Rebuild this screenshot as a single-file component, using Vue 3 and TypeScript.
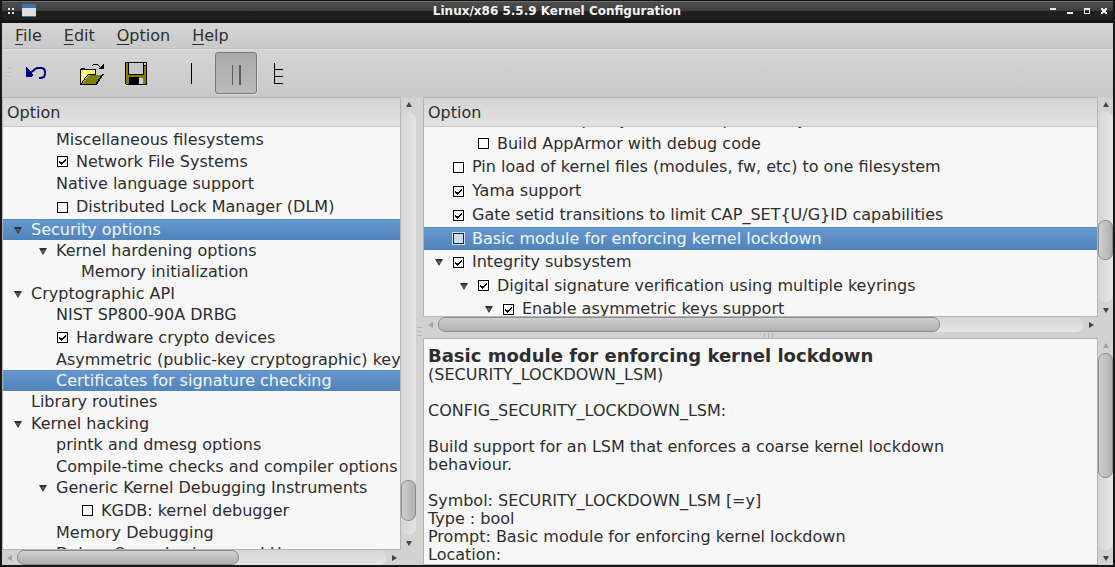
<script setup lang="ts">
import { h, ref } from 'vue'
import type { FunctionalComponent } from 'vue'

interface Row {
  label: string
  depth: number
  size: 'short' | 'mid' | 'check' | 'tall'
  open?: boolean
  box?: boolean
  on?: boolean
  selected?: boolean
}

interface BarProps {
  axis: 'vertical' | 'horizontal'
  before: number
  thumb: number
  after: number
  atStart?: boolean
}

const ScrollBar: FunctionalComponent<BarProps> = (p) => {
  const vertical = p.axis === 'vertical'
  const arrow = (points: string) =>
    h('svg', { width: 8, height: 8, viewBox: '0 0 8 8' }, [h('polygon', { points })])
  return h('div', { class: ['bar', p.axis] }, [
    h(
      'button',
      { class: ['bar-arrow', { off: p.atStart }], type: 'button', 'aria-label': vertical ? 'Scroll up' : 'Scroll left' },
      [arrow(vertical ? '1,6 7,6 4,1' : '6,1 6,7 1,4')],
    ),
    h('div', { class: 'bar-track' }, [
      h('span', { style: { flexGrow: p.before } }),
      h('span', { class: 'bar-thumb', style: { flexGrow: p.thumb } }),
      h('span', { style: { flexGrow: p.after } }),
    ]),
    h(
      'button',
      { class: 'bar-arrow', type: 'button', 'aria-label': vertical ? 'Scroll down' : 'Scroll right' },
      [arrow(vertical ? '1,2 7,2 4,7' : '2,1 2,7 7,4')],
    ),
  ])
}
ScrollBar.props = {
  axis: { type: String, required: true },
  before: { type: Number, required: true },
  thumb: { type: Number, required: true },
  after: { type: Number, required: true },
  atStart: Boolean,
} as any

const menus = [
  ['F', 'ile'],
  ['E', 'dit'],
  ['O', 'ption'],
  ['H', 'elp'],
]

const menuRows = ref<Row[]>([
  { label: 'Miscellaneous filesystems', depth: 2, size: 'short' },
  { label: 'Network File Systems', depth: 2, size: 'check', box: true, on: true },
  { label: 'Native language support', depth: 2, size: 'mid' },
  { label: 'Distributed Lock Manager (DLM)', depth: 2, size: 'tall', box: true },
  { label: 'Security options', depth: 1, size: 'short', open: true, selected: true },
  { label: 'Kernel hardening options', depth: 2, size: 'short', open: true },
  { label: 'Memory initialization', depth: 3, size: 'mid' },
  { label: 'Cryptographic API', depth: 1, size: 'short', open: true },
  { label: 'NIST SP800-90A DRBG', depth: 2, size: 'mid' },
  { label: 'Hardware crypto devices', depth: 2, size: 'check', box: true, on: true },
  { label: 'Asymmetric (public-key cryptographic) key type', depth: 2, size: 'short' },
  { label: 'Certificates for signature checking', depth: 2, size: 'short', selected: true },
  { label: 'Library routines', depth: 1, size: 'mid' },
  { label: 'Kernel hacking', depth: 1, size: 'short', open: true },
  { label: 'printk and dmesg options', depth: 2, size: 'mid' },
  { label: 'Compile-time checks and compiler options', depth: 2, size: 'short' },
  { label: 'Generic Kernel Debugging Instruments', depth: 2, size: 'mid', open: true },
  { label: 'KGDB: kernel debugger', depth: 3, size: 'check', box: true },
  { label: 'Memory Debugging', depth: 2, size: 'short' },
  { label: 'Debug Oops, Lockups and Hangs', depth: 2, size: 'mid' },
])

const optionRows = ref<Row[]>([
  { label: 'Enable policy hash introspection by default', depth: 3, size: 'tall', box: true, on: true },
  { label: 'Build AppArmor with debug code', depth: 2, size: 'check', box: true },
  { label: 'Pin load of kernel files (modules, fw, etc) to one filesystem', depth: 1, size: 'tall', box: true },
  { label: 'Yama support', depth: 1, size: 'tall', box: true, on: true },
  { label: 'Gate setid transitions to limit CAP_SET{U/G}ID capabilities', depth: 1, size: 'tall', box: true, on: true },
  { label: 'Basic module for enforcing kernel lockdown', depth: 1, size: 'check', box: true, selected: true },
  { label: 'Integrity subsystem', depth: 1, size: 'tall', box: true, on: true, open: true },
  { label: 'Digital signature verification using multiple keyrings', depth: 2, size: 'check', box: true, on: true, open: true },
  { label: 'Enable asymmetric keys support', depth: 3, size: 'tall', box: true, on: true, open: true },
])

const panes = [
  { id: 'menu', rows: menuRows },
  { id: 'option', rows: optionRows },
]
</script>

<template>
  <div class="window">
    <header class="titlebar">
      <svg width="8" height="8" viewBox="0 0 8 8" fill="#e6e6e6">
        <path d="M1 1h2v2H1zM5 1h2v2H5zM1 5h2v2H1zM5 5h2v2H5z" />
      </svg>
      <svg width="14" height="14" viewBox="0 0 14 14">
        <rect width="14" height="13" fill="#3f6fae" />
        <rect y="4" width="14" height="8" fill="#dedede" />
      </svg>
      <h1>Linux/x86 5.5.9 Kernel Configuration</h1>
      <div class="controls">
        <button type="button" aria-label="Shade"><svg width="6" height="6"><path d="M0 0h6v2H0z" /></svg></button>
        <button type="button" aria-label="Minimize"><svg width="6" height="6"><path d="M0 4h6v2H0z" /></svg></button>
        <button type="button" aria-label="Maximize">
          <svg width="6" height="6"><path fill-rule="evenodd" d="M0 0h6v6H0zM1 2v3h4V2z" /></svg>
        </button>
        <button type="button" aria-label="Close">
          <svg width="6" height="6"><path d="M0 0h2v1h2V0h2v2H5v2h1v2H4V5H2v1H0V4h1V2H0z" /></svg>
        </button>
      </div>
    </header>

    <nav class="menubar">
      <button v-for="m in menus" :key="m[0]" type="button"><u>{{ m[0] }}</u>{{ m[1] }}</button>
    </nav>

    <div class="toolbar">
      <span class="handle"></span>
      <button type="button" aria-label="Back">
        <svg width="24" height="24" viewBox="0 0 24 24">
          <path d="M2 6h1v1h1v1h1v1h1v1h2v1h-1v1h1v1h1v2h-1v1H2z" fill="#000080" />
          <path d="M6 12l3-2 2-2 2-1h5l2 1 1 2v3l-1 3-3 1h-2" fill="none" stroke="#000080" stroke-width="2" />
        </svg>
      </button>
      <span class="gap"></span>
      <button type="button" aria-label="Load">
        <svg width="24" height="24" viewBox="0 0 24 24" shape-rendering="crispEdges">
          <path d="M0 8h1V7h4v1h11v6h-1V9H1v14H0z" fill="#000" />
          <path d="M1 9h14v4H7v1H6v1H5v1H4v2H3v1H2v2H1z" fill="#ffff70" />
          <path d="M2 23L9 14h14l-6 9z" fill="#808000" />
          <path d="M8 13h16v1h-1v1h-1v2h-1v1h-1v2h-1v1h-1v2h-1v1H0v-1h1v-1h1v-2h1v-1h1v-2h1v-1h1v-1h1v-1h1zM8 14v1H7v1H6v1H5v2H4v1H3v2H2v1h14v-2h1v-1h1v-2h1v-1h1v-2h1v-1h1v-1z" fill="#000" fill-rule="evenodd" />
          <path d="M12 4h1V3h5v1h1v1h1v1h1V5h1V4h1V3h1v5h-5V7h1V6h-1V5h-1V4h-5v1h-1z" fill="#000" />
        </svg>
      </button>
      <button type="button" aria-label="Save">
        <svg width="24" height="24" viewBox="0 0 24 24" shape-rendering="crispEdges">
          <path d="M1 1h22v23H2v-1H1z" fill="#000" />
          <path d="M2 2h2v12h16V5h2v18H2z" fill="#808000" />
          <path d="M5 2h14v11H5z" fill="#c9c9c9" />
          <path d="M20 2h2v2h-2zM15 17h4v6h-4z" fill="#d0d0d0" />
          <path d="M5 16h10v7H5z" fill="#000" />
          <path d="M10 6h1v1h-1z" fill="#d8a8e0" />
        </svg>
      </button>
      <span class="gap"></span>
      <button type="button" aria-label="Single View">
        <svg width="24" height="24" viewBox="0 0 24 24"><path d="M11 2h1v21h-1z" /></svg>
      </button>
      <button type="button" class="pressed" aria-label="Split View" aria-pressed="true">
        <svg width="24" height="24" viewBox="0 0 24 24" fill="#5c5c5c"><path d="M8 4h1v20H8zM15 4h2v20h-2z" /></svg>
      </button>
      <button type="button" aria-label="Full View">
        <svg width="24" height="24" viewBox="0 0 24 24"><path d="M6 2h1v6h8v1H7v6h8v1H7v6h8v1H6z" /></svg>
      </button>
    </div>

    <main class="panes">
      <section v-for="pane in panes" :key="pane.id" class="pane" :class="pane.id + '-pane'">
        <div class="scroll-area">
          <div class="view">
            <h2>Option</h2>
            <div class="clip">
              <ul :class="pane.id + '-rows'">
                <li
                  v-for="row in pane.rows.value"
                  :key="row.label"
                  :class="[row.size, 'depth-' + row.depth, { selected: row.selected }]"
                >
                  <button v-if="row.open" class="twisty" type="button" aria-label="Collapse">
                    <svg width="8" height="8" viewBox="0 0 8 8">
                      <polygon points="0,1 8,1 4,8" fill="#303030" />
                      <polygon points="2,3 6,3 4,6" fill="#666" />
                    </svg>
                  </button>
                  <span v-else class="twisty"></span>
                  <label v-if="row.box"><input v-model="row.on" type="checkbox" /><span>{{ row.label }}</span></label>
                  <span v-else>{{ row.label }}</span>
                </li>
              </ul>
            </div>
          </div>
          <ScrollBar v-if="pane.id === 'menu'" axis="vertical" :before="371" :thumb="39" :after="14" />
          <ScrollBar v-else axis="vertical" :before="109" :thumb="38" :after="42" />
          <ScrollBar v-if="pane.id === 'menu'" axis="horizontal" :before="0" :thumb="221" :after="148" at-start />
          <ScrollBar v-else axis="horizontal" :before="0" :thumb="503" :after="144" at-start />
        </div>
        <template v-if="pane.id === 'option'">
          <div class="splitter"><i></i><i></i><i></i></div>
          <div class="help-area">
            <article>
              <h3>Basic module for enforcing kernel lockdown</h3>
              <p>(SECURITY_LOCKDOWN_LSM)</p>
              <p class="para">CONFIG_SECURITY_LOCKDOWN_LSM:</p>
              <p class="para">Build support for an LSM that enforces a coarse kernel lockdown<br />behaviour.</p>
              <p class="para">
                Symbol: SECURITY_LOCKDOWN_LSM [=y]<br />Type : bool<br />Prompt: Basic module for enforcing kernel
                lockdown<br />Location:
              </p>
            </article>
            <ScrollBar axis="vertical" :before="0" :thumb="125" :after="73" at-start />
          </div>
        </template>
      </section>
      <div class="divider"><i></i><i></i><i></i></div>
    </main>
  </div>
</template>

<style scoped>
.window {
  box-sizing: border-box;
  height: 100vh;
  display: flex;
  flex-direction: column;
  border: solid #171717;
  border-width: 0 2px 2px;
  background: #d2d2d2;
  color: #2e2e2e;
  font: 16px/20px "DejaVu Sans", sans-serif;
  overflow: hidden;
}
button {
  padding: 0;
  border: 0;
  background: none;
  color: inherit;
  font: inherit;
}
h1, h2, h3, p, ul {
  margin: 0;
  padding: 0;
}
.titlebar {
  height: 23px;
  flex: none;
  box-sizing: border-box;
  display: flex;
  align-items: center;
  gap: 7px;
  padding: 0 6px 2px 5px;
  border-top: 1px solid #111;
  box-shadow: inset 0 1px #6f6c6f;
  background: linear-gradient(#505050, #3e3e3e 10px, #202020 10px, #202020 19px, #131313 19px);
}
.titlebar h1 {
  flex: 1;
  padding-left: 28px;
  color: #f2f2f2;
  font-size: 12px;
  line-height: 20px;
  text-align: center;
}
.controls {
  display: flex;
  gap: 11px;
}
.controls button {
  width: 6px;
  height: 20px;
  display: flex;
  align-items: center;
}
.controls svg {
  fill: #e8e8e8;
}
.menubar {
  height: 26px;
  flex: none;
  display: flex;
  padding-left: 2px;
  background: linear-gradient(#d5d5d5, #c9c9c9);
}
.menubar button {
  padding: 0 11px;
}
.menubar u {
  text-decoration-thickness: 1px;
  text-underline-offset: 3px;
}
.toolbar {
  height: 48px;
  flex: none;
  box-sizing: border-box;
  display: flex;
  align-items: center;
  gap: 2px;
  padding: 0 0 2px 5px;
  border-top: 1px solid #dedede;
  box-shadow: 0 -1px #c0c0c0;
  background: linear-gradient(#d5d5d5, #c8c8c8);
}
.handle {
  width: 4px;
  height: 10px;
  margin-right: 2px;
  background: repeating-linear-gradient(#bcbcbc 0 1px, #dadada 1px 2px, transparent 2px 4px);
}
.toolbar button {
  box-sizing: border-box;
  width: 42px;
  height: 42px;
  display: grid;
  place-items: center;
  border-radius: 3px;
}
.toolbar .gap {
  width: 10px;
}
.toolbar .pressed {
  border: 1px solid #777;
  background: linear-gradient(#aaa, #bababa);
  box-shadow: 1px 1px #dcdcdc;
}
.panes {
  flex: 1;
  min-height: 0;
  display: grid;
  grid-template-columns: 3fr 7px 5fr;
}
.pane {
  min-width: 0;
  min-height: 0;
  display: grid;
  grid-row: 1;
}
.menu-pane {
  grid-column: 1;
}
.option-pane {
  grid-column: 3;
  grid-template-rows: 235fr 6px 227fr;
}
.scroll-area {
  min-width: 0;
  min-height: 0;
  display: grid;
  grid-template-columns: 1fr 15px;
  grid-template-rows: 1fr 15px;
}
.view {
  min-width: 0;
  min-height: 0;
  display: flex;
  flex-direction: column;
  border: 1px solid #b4b4b4;
  background: #f7f7f7;
}
.view h2 {
  flex: none;
  height: 28px;
  padding-left: 4px;
  border-bottom: 1px solid #c4c4c4;
  background: linear-gradient(#d4d4d4, #e2e2e2);
  font-size: 16px;
  font-weight: 400;
  line-height: 30px;
}
.clip {
  flex: 1;
  min-height: 0;
  overflow: hidden;
}
ul {
  list-style: none;
}
.menu-rows {
  margin-top: 2px;
}
.option-rows {
  margin-top: -19px;
}
li {
  display: flex;
  align-items: center;
  white-space: nowrap;
}
.short { height: 21px; }
.mid { height: 22px; }
.check { height: 23px; }
.tall { height: 24px; }
.depth-1 { padding-left: 11px; }
.depth-2 { padding-left: 36px; }
.depth-3 { padding-left: 61px; }
.selected {
  color: #f2f5fa;
  background: linear-gradient(#4f80b8, #6698d0 1px, #5083b9);
}
.twisty {
  width: 8px;
  height: 8px;
  margin-right: 9px;
  flex: none;
  display: flex;
}
label {
  display: flex;
  align-items: center;
}
input {
  appearance: none;
  box-sizing: border-box;
  width: 11px;
  height: 11px;
  margin: 0 8px 0 1px;
  border: 1px solid #000;
  background: #fff;
  box-shadow: 0 0 0 1px #fff;
}
input:checked {
  background:
    linear-gradient(#000, #000) 1px 4px / 1px 2px no-repeat,
    linear-gradient(#000, #000) 2px 5px / 1px 2px no-repeat,
    linear-gradient(#000, #000) 3px 5px / 1px 3px no-repeat,
    linear-gradient(#000, #000) 4px 5px / 1px 2px no-repeat,
    linear-gradient(#000, #000) 5px 4px / 1px 2px no-repeat,
    linear-gradient(#000, #000) 6px 3px / 1px 2px no-repeat,
    linear-gradient(#000, #000) 7px 2px / 1px 2px no-repeat,
    #fff;
}
.selected input {
  border-color: #14283c;
  background: #cfdeef;
  box-shadow: 0 0 0 1px #cfdeef;
}
.divider {
  grid-column: 2;
  grid-row: 1;
  display: flex;
  flex-direction: column;
  justify-content: center;
  align-items: center;
  gap: 3px;
}
.divider i {
  width: 5px;
  height: 1px;
  background: #b8b8b8;
}
.splitter {
  display: flex;
  justify-content: center;
  align-items: center;
  gap: 3px;
}
.splitter i {
  width: 1px;
  height: 5px;
  background: #b4b4b4;
}
.help-area {
  min-height: 0;
  display: grid;
  grid-template-columns: 1fr 15px;
}
article {
  min-width: 0;
  padding: 7px 4px 0;
  border: 1px solid #b4b4b4;
  background: #f7f7f7;
  line-height: 18px;
  overflow: hidden;
}
article h3 {
  font-size: 18px;
  line-height: 20px;
}
.para {
  margin-top: 18px;
}
</style>

<style>
body {
  margin: 0;
}
.bar {
  min-width: 0;
  min-height: 0;
  display: flex;
  background: #d2d2d2;
}
.bar.vertical,
.bar.vertical .bar-track {
  flex-direction: column;
}
.bar .bar-arrow {
  flex: none;
  width: 15px;
  height: 15px;
  padding: 0;
  border: 0;
  background: none;
  display: grid;
  place-items: center;
  fill: #444;
}
.bar .bar-arrow.off {
  fill: #a2a2a2;
}
.bar-track {
  flex: 1;
  display: flex;
  border-radius: 7px;
  background: linear-gradient(90deg, #d6d6d6, #e4e4e4);
}
.horizontal .bar-track {
  background: linear-gradient(#d6d6d6, #e4e4e4);
}
.bar-thumb {
  box-sizing: border-box;
  border: 1px solid #8c8c8c;
  border-radius: 7px;
  background: linear-gradient(90deg, #d0d0d0, #b0b0b0);
}
.horizontal .bar-thumb {
  background: linear-gradient(#d0d0d0, #b0b0b0);
}
</style>
